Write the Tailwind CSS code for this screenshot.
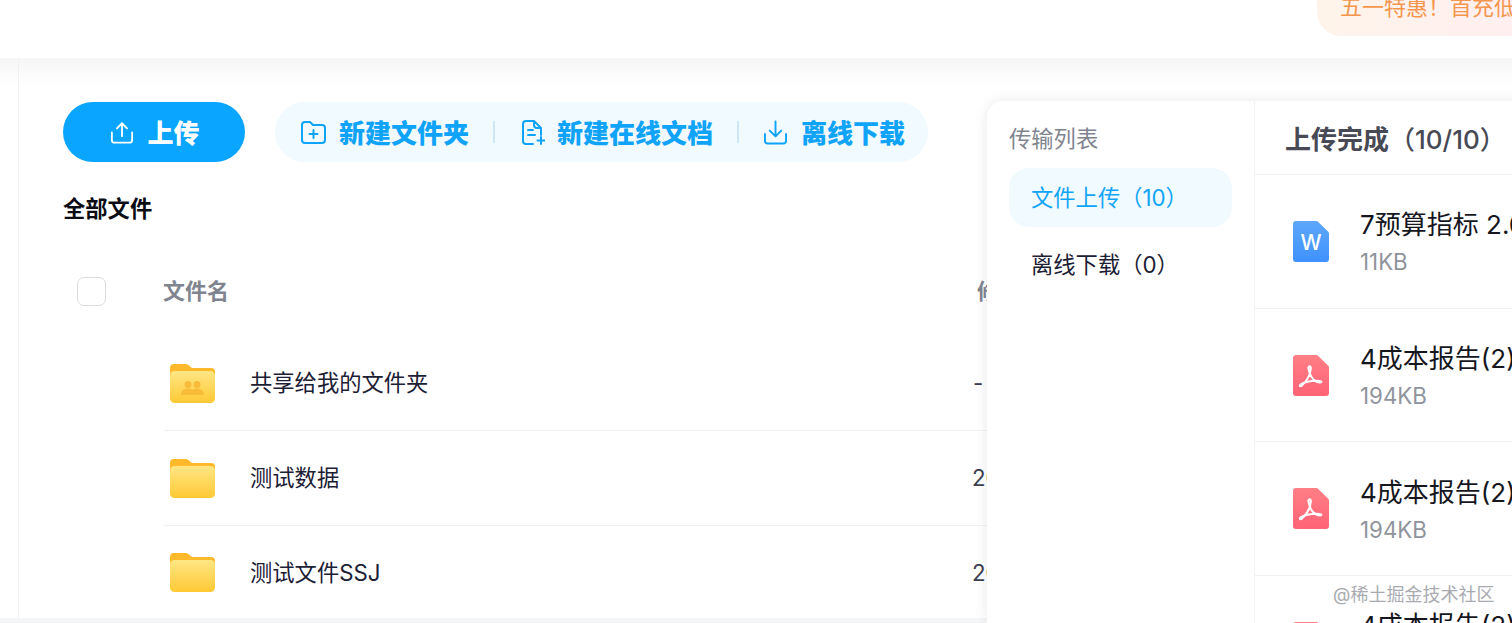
<!DOCTYPE html>
<html lang="zh-CN">
<head>
  <meta charset="UTF-8" />
  <meta name="viewport" content="width=device-width, initial-scale=1.0" />
  <title>全部文件</title>
  <script src="https://cdn.jsdelivr.net/npm/@tailwindcss/browser@4"></script>
</head>
<body class="bg-white text-[#1c2035] font-['Inter','Noto_Sans_CJK_SC',sans-serif]">
  <div class="relative h-[623px] w-[1512px] overflow-hidden flex flex-col">
    <!-- Header -->
    <header class="h-[58px] shrink-0 flex justify-end bg-white overflow-hidden">
      <div class="h-[36px] w-[195px] shrink-0 rounded-bl-[24px] bg-gradient-to-r from-[#fff4ea] to-[#ffeff0] pl-[23px] flex items-start overflow-hidden">
        <span class="-mt-[4px] whitespace-nowrap text-[22px] leading-[22px] text-[#f5964f]">五一特惠！首充低至</span>
      </div>
    </header>

    <div class="flex flex-1 min-h-0 bg-gradient-to-b from-[#f6f6f6] to-white to-[30px]">
      <!-- Left gutter -->
      <div class="w-[19px] shrink-0 border-r border-[#f1f1f3]"></div>

      <!-- Main -->
      <main class="flex-1 min-w-0 flex flex-col pl-[44px] pt-[44px] overflow-hidden">
        <div class="flex items-center gap-[30px] h-[60px] shrink-0">
          <button class="w-[182px] h-[60px] rounded-full bg-[#0aa5ff] text-white flex items-center justify-center gap-[13px] pl-[2px] text-[26px] font-black">
            <svg class="w-[24px] h-[25px]" viewBox="0 0 26 26" fill="none" stroke="currentColor" stroke-width="2" stroke-linecap="round" stroke-linejoin="round"><path d="M13 17V3M7.500 8.500 13 3l5.500 5.500M2 13v8a3 3 0 0 0 3 3h16a3 3 0 0 0 3-3v-8"/></svg>
            <span class="mt-[2px]">上传</span>
          </button>
          <div class="w-[653px] h-[60px] rounded-full bg-[#f0faff] text-[#0fa3fa] flex items-center pl-[26px] text-[26px] font-black">
            <span class="flex items-center gap-[13px]">
              <svg class="w-[25px] h-[23px]" viewBox="0 0 25 23" fill="none" stroke="currentColor" stroke-width="2" stroke-linecap="round" stroke-linejoin="round"><path d="M1 4a3 3 0 0 1 3-3h5l3 3h9a3 3 0 0 1 3 3v12a3 3 0 0 1-3 3H4a3 3 0 0 1-3-3zM12.500 9v8M8.500 13h8"/></svg>
              <span class="mt-[2px]">新建文件夹</span>
            </span>
            <span class="w-[2px] h-[22px] bg-[#cfe6f5] ml-[24px] mr-[27px]"></span>
            <span class="flex items-center gap-[12px]">
              <svg class="w-[23px] h-[25px]" viewBox="0 0 23 25" fill="none" stroke="currentColor" stroke-width="2" stroke-linecap="round" stroke-linejoin="round"><path d="M11 24H4a3 3 0 0 1-3-3V4a3 3 0 0 1 3-3h8l7 7v7M12 1v4a3 3 0 0 0 3 3h4M6 10h5M6 15h7M19 17v7M15.500 20.500h7"/></svg>
              <span class="mt-[2px]">新建在线文档</span>
            </span>
            <span class="w-[2px] h-[22px] bg-[#cfe6f5] ml-[24px] mr-[25px]"></span>
            <span class="flex items-center gap-[14px]">
              <svg class="w-[23px] h-[25px]" viewBox="0 0 24 25" fill="none" stroke="currentColor" stroke-width="2" stroke-linecap="round" stroke-linejoin="round"><path d="M12 1v15M6 10.500l6 6 6-6M1 14v7a3 3 0 0 0 3 3h16a3 3 0 0 0 3-3v-7"/></svg>
              <span class="mt-[2px]">离线下载</span>
            </span>
          </div>
        </div>

        <h2 class="mt-[31px] text-[22.3px] leading-[32px] font-bold text-[#0c0d14] shrink-0">全部文件</h2>

        <!-- Table head -->
        <div class="mt-[50px] flex items-center h-[32px] shrink-0 text-[22px] font-bold text-[#80848f]">
          <span class="ml-[14px] w-[29px] h-[29px] rounded-[7px] border border-[#dcdcdf] bg-white"></span>
          <span class="ml-[57px] w-[814px]">文件名</span>
          <span class="whitespace-nowrap">修改时间</span>
        </div>

        <!-- Table rows -->
        <div class="mt-[29px] ml-[101px] flex flex-col text-[22.3px] shrink-0">
          <div class="h-[95px] flex items-center border-b border-[#f1f1f3]">
            <svg class="ml-[6px] w-[45px] h-[39px] shrink-0" viewBox="0 0 45 39">
              <defs>
                <linearGradient id="folderFront" x1="0" y1="0" x2="0" y2="1"><stop offset="0" stop-color="#ffe684"/><stop offset="1" stop-color="#ffc935"/></linearGradient>
              </defs>
              <path d="M0 4a4 4 0 0 1 4-4h12a4 4 0 0 1 3 1.500L22 4h19a4 4 0 0 1 4 4v10H0z" fill="#ffb92b"/>
              <rect y="7" width="45" height="32" rx="4.500" fill="url(#folderFront)"/>
              <g fill="#f8bb3a">
                <circle cx="18" cy="20.500" r="3.500"/><circle cx="27" cy="20.500" r="3.500"/>
                <path d="M11 31c0-4 3-6.500 7-6.500 2 0 3.500.6 4.500 1.500 1-.9 2.500-1.500 4.500-1.500 4 0 7 2.500 7 6.500z"/>
              </g>
            </svg>
            <span class="ml-[35px]">共享给我的文件夹</span>
            <span class="absolute left-[973px] text-[#3c4050]">-</span>
          </div>
          <div class="h-[95px] flex items-center border-b border-[#f1f1f3]">
            <svg class="ml-[6px] w-[45px] h-[39px] shrink-0" viewBox="0 0 45 39">
              <path d="M0 4a4 4 0 0 1 4-4h12a4 4 0 0 1 3 1.500L22 4h19a4 4 0 0 1 4 4v10H0z" fill="#ffb92b"/>
              <rect y="7" width="45" height="32" rx="4.500" fill="url(#folderFront)"/>
            </svg>
            <span class="ml-[35px]">测试数据</span>
            <span class="absolute left-[972px] text-[#3c4050] whitespace-nowrap">2023-04-28</span>
          </div>
          <div class="h-[93px] flex items-center">
            <svg class="ml-[6px] w-[45px] h-[39px] shrink-0" viewBox="0 0 45 39">
              <path d="M0 4a4 4 0 0 1 4-4h12a4 4 0 0 1 3 1.500L22 4h19a4 4 0 0 1 4 4v10H0z" fill="#ffb92b"/>
              <rect y="7" width="45" height="32" rx="4.500" fill="url(#folderFront)"/>
            </svg>
            <span class="ml-[35px]">测试文件SSJ</span>
            <span class="absolute left-[972px] text-[#3c4050] whitespace-nowrap">2023-04-28</span>
          </div>
        </div>
      </main>
    </div>

    <!-- Bottom band -->
    <div class="h-[5px] shrink-0 bg-[#f3f5f7]"></div>

    <!-- Transfer panel -->
    <aside class="absolute left-[987px] top-[101px] bottom-0 w-[700px] flex bg-white rounded-tl-[16px] shadow-[0_0_14px_rgba(0,0,0,0.09)]">
      <div class="w-[268px] shrink-0 border-r border-[#f1f1f3] pl-[22px] pr-[22px] pt-[21px] text-[22.3px]">
        <div class="leading-[33px] text-[#80848f]">传输列表</div>
        <div class="mt-[13px] h-[59px] pl-[22px] rounded-[20px] bg-[#f0faff] text-[#12a5f7] flex items-center">文件上传（10）</div>
        <div class="mt-[8px] h-[59px] pl-[22px] flex items-center text-[#1c2035]">离线下载（0）</div>
      </div>
      <div class="flex-1 min-w-0 text-[#15161e]">
        <div class="h-[74px] pl-[30px] pt-[3px] flex items-center border-b border-[#f1f1f3] text-[26px] font-bold text-[#474a54] whitespace-nowrap">上传完成<span class="font-medium">（10/10）</span></div>

        <div class="h-[134px] flex items-center border-b border-[#f1f1f3] pl-[38px]">
          <svg class="w-[36px] h-[41px] shrink-0" viewBox="0 0 36 41">
            <defs>
              <linearGradient id="wordFill" x1="0" y1="0" x2="0" y2="1"><stop offset="0" stop-color="#5ea6fb"/><stop offset="1" stop-color="#3f92fd"/></linearGradient>
              <linearGradient id="pdfFill" x1="0" y1="0" x2="0" y2="1"><stop offset="0" stop-color="#ff7f85"/><stop offset="1" stop-color="#ff6376"/></linearGradient>
            </defs>
            <path d="M3 0h20c1 0 1.500.3 2 .8l10 9.700c.7.7 1 1.200 1 2.200V38a3 3 0 0 1-3 3H3a3 3 0 0 1-3-3V3a3 3 0 0 1 3-3z" fill="url(#wordFill)"/>
            <text x="18" y="29" text-anchor="middle" fill="#fff" font-size="21" font-weight="500" font-family="Inter, sans-serif">W</text>
          </svg>
          <div class="ml-[31px] mt-[2px] whitespace-nowrap">
            <div class="text-[26px] leading-[36px]">7预算指标 2.0.docx</div>
            <div class="mt-[3px] text-[22.3px] leading-[32px] text-[#8f939c]">11KB</div>
          </div>
        </div>

        <div class="h-[133px] flex items-center border-b border-[#f1f1f3] pl-[38px]">
          <svg class="w-[36px] h-[41px] shrink-0" viewBox="0 0 36 41">
            <path d="M3 0h20c1 0 1.500.3 2 .8l10 9.700c.7.7 1 1.200 1 2.200V38a3 3 0 0 1-3 3H3a3 3 0 0 1-3-3V3a3 3 0 0 1 3-3z" fill="url(#pdfFill)"/>
            <path d="M15.500 12c1.500-2 2.500 0 2.300 2-.4 5-4 12-9.300 17-1.500 1-2.500-.5-.8-1.700C11 27 19 25 27 26c2 .3 2 1.500 0 1.500-5 0-9-5-10.300-9.500-.6-2-1.700-4.200-1.200-6z" fill="none" stroke="#fff" stroke-width="2" stroke-linejoin="round"/>
          </svg>
          <div class="ml-[31px] mt-[2px] whitespace-nowrap">
            <div class="text-[26px] leading-[36px]">4成本报告(2).pdf</div>
            <div class="mt-[3px] text-[22.3px] leading-[32px] text-[#8f939c]">194KB</div>
          </div>
        </div>

        <div class="h-[134px] flex items-center border-b border-[#f1f1f3] pl-[38px]">
          <svg class="w-[36px] h-[41px] shrink-0" viewBox="0 0 36 41">
            <path d="M3 0h20c1 0 1.500.3 2 .8l10 9.700c.7.7 1 1.200 1 2.200V38a3 3 0 0 1-3 3H3a3 3 0 0 1-3-3V3a3 3 0 0 1 3-3z" fill="url(#pdfFill)"/>
            <path d="M15.500 12c1.500-2 2.500 0 2.300 2-.4 5-4 12-9.300 17-1.500 1-2.500-.5-.8-1.700C11 27 19 25 27 26c2 .3 2 1.500 0 1.500-5 0-9-5-10.300-9.500-.6-2-1.700-4.200-1.200-6z" fill="none" stroke="#fff" stroke-width="2" stroke-linejoin="round"/>
          </svg>
          <div class="ml-[31px] mt-[3px] whitespace-nowrap">
            <div class="text-[26px] leading-[36px]">4成本报告(2).pdf</div>
            <div class="mt-[3px] text-[22.3px] leading-[32px] text-[#8f939c]">194KB</div>
          </div>
        </div>

        <div class="h-[133px] flex items-center pl-[38px]">
          <svg class="w-[36px] h-[41px] shrink-0" viewBox="0 0 36 41">
            <path d="M3 0h20c1 0 1.500.3 2 .8l10 9.700c.7.7 1 1.200 1 2.200V38a3 3 0 0 1-3 3H3a3 3 0 0 1-3-3V3a3 3 0 0 1 3-3z" fill="url(#pdfFill)"/>
          </svg>
          <div class="ml-[31px] mt-[2px] whitespace-nowrap">
            <div class="text-[26px] leading-[36px]">4成本报告(2).pdf</div>
            <div class="mt-[3px] text-[22.3px] leading-[32px] text-[#8f939c]">194KB</div>
          </div>
        </div>
      </div>
    </aside>

    <!-- Watermark -->
    <span class="absolute left-[1333px] top-[582px] text-[18px] leading-[26px] text-[#a9abb0] whitespace-nowrap">@稀土掘金技术社区</span>
  </div>
</body>
</html>
